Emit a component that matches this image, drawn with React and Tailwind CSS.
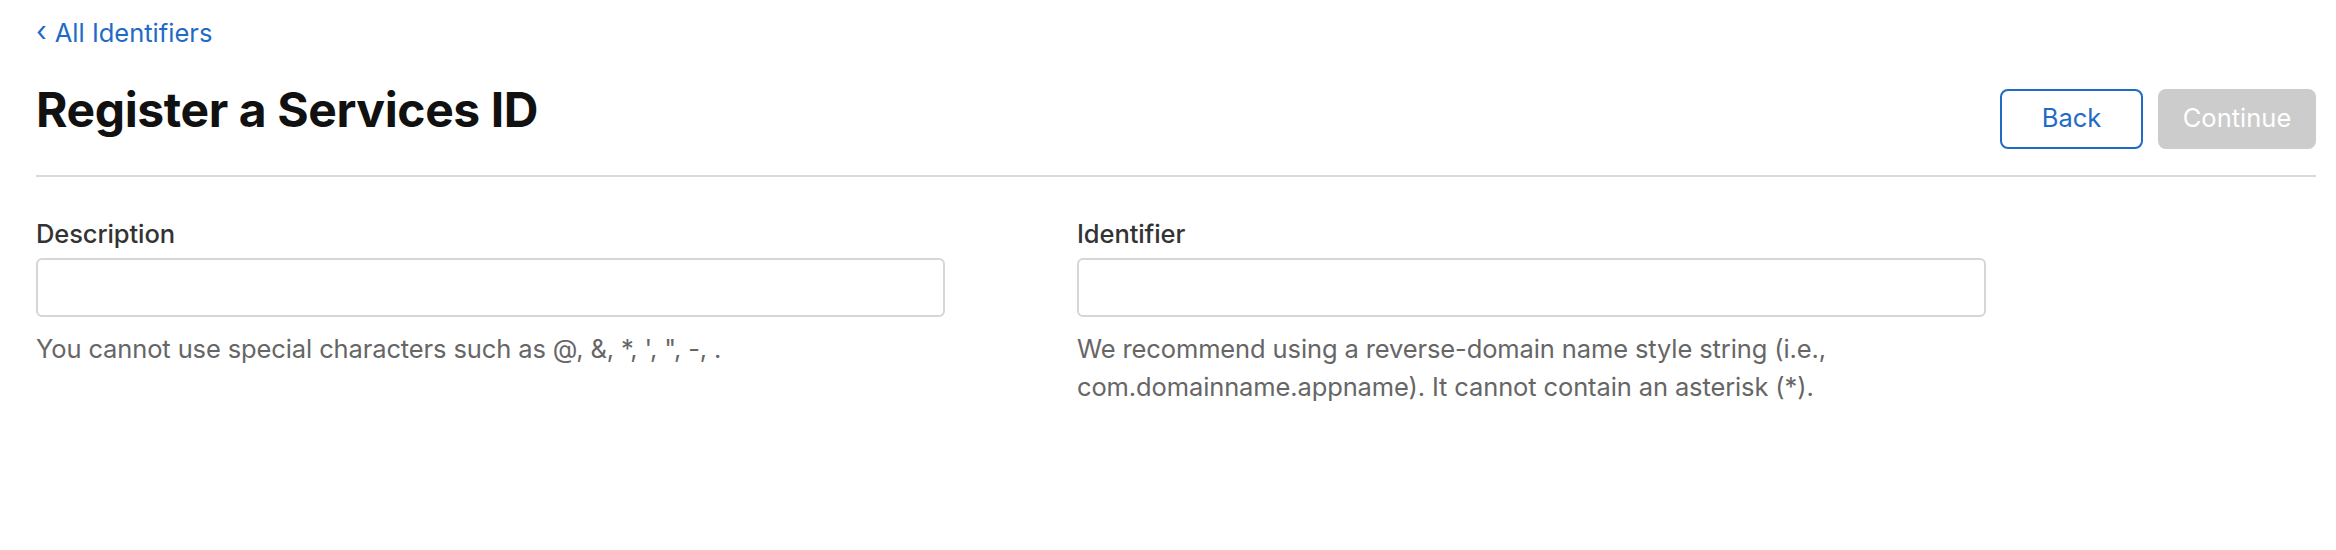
const FONT = "font-['Inter','Liberation_Sans',sans-serif]";

const Field = ({ label, help }) => (
  <div className="w-[909px] flex flex-col">
    <label className="text-[25.5px] leading-[37.5px] font-medium tracking-[-0.1px] text-[#333333]">
      {label}
    </label>
    <input
      type="text"
      className="mt-[6px] h-[59px] w-full rounded-[6px] border-2 border-[#d6d6d6] bg-white px-4 outline-none"
    />
    <p className="mt-[13px] text-[25.5px] leading-[37.5px] tracking-[-0.12px] text-[#666666]">
      {help}
    </p>
  </div>
);

export default function App() {
  return (
    <div className={`${FONT} min-h-[550px] w-full bg-white pl-[36px] pr-[20px]`}>
      <div className="pt-[14px]">
        <a
          href="#"
          className="text-[25.5px] leading-[37.5px] text-[#1f6bc5] flex items-center gap-[8px]"
        >
          <span className="text-[28px] leading-none -mt-[3px]">‹</span>
          <span>All Identifiers</span>
        </a>
      </div>

      <div className="mt-[30px] flex items-start justify-between">
        <h1 className="text-[48px] leading-[56px] font-bold tracking-[-0.4px] text-[#111111]">
          Register a Services ID
        </h1>
        <div className="mt-[7px] flex gap-[15px]">
          <button className="h-[60px] w-[143px] rounded-[8px] border-2 border-[#1f6bc5] bg-white text-[25.5px] text-[#1f6bc5]">
            Back
          </button>
          <button
            disabled
            className="h-[60px] w-[158px] rounded-[8px] bg-[#cccccc] text-[25.5px] text-white"
          >
            Continue
          </button>
        </div>
      </div>

      <div className="mt-[26px] h-[2px] bg-[#dadada]" />

      <div className="mt-[38px] flex gap-[132px]">
        <Field
          label="Description"
          help={`You cannot use special characters such as @, &, *, ', ", -, .`}
        />
        <Field
          label="Identifier"
          help="We recommend using a reverse-domain name style string (i.e., com.domainname.appname). It cannot contain an asterisk (*)."
        />
      </div>
    </div>
  );
}
